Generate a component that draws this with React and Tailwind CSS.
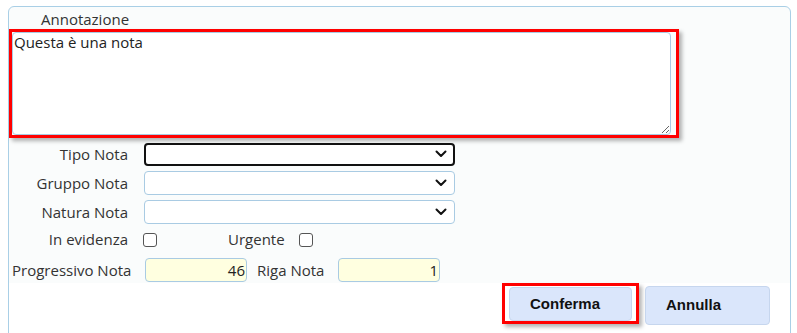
const labelCls = "text-[15px] leading-[19px] text-[#333] whitespace-nowrap";

function Chevron() {
  return (
    <svg width="12" height="8" viewBox="0 0 12 8" className="shrink-0">
      <polyline points="1.5,1.5 6,6 10.5,1.5" fill="none" stroke="#111" strokeWidth="2" strokeLinecap="round" strokeLinejoin="round" />
    </svg>
  );
}

function SelectRow({ label, focused }) {
  return (
    <div className="flex items-center h-[24px]">
      <div className={`w-[119px] text-right ${labelCls}`}>{label}</div>
      <div
        className={
          focused
            ? "ml-[16px] w-[311px] h-[23px] flex items-center justify-end pr-[6px] bg-white border-2 border-[#111] rounded-[4px]"
            : "ml-[16px] w-[311px] h-[24px] flex items-center justify-end pr-[7px] bg-white border border-[#a9cbe3] rounded-[4px]"
        }
      >
        <Chevron />
      </div>
    </div>
  );
}

function Check() {
  return <div className="w-[14px] h-[14px] bg-white border border-[#555] rounded-[3px]" />;
}

export default function App() {
  return (
    <div className="w-[797px] h-[333px] bg-white overflow-hidden" style={{ fontFamily: '"Open Sans", sans-serif' }}>
      <div className="ml-[8px] mt-[6px] w-[783px] h-[340px] border border-[#a9cfe6] rounded-t-[6px] bg-[#fafcfc] pt-[3px]">
        <div className={`pl-[32px] ${labelCls} leading-[18px]`}>Annotazione</div>

        {/* nota */}
        <div className="w-[670px] h-[109px] border-[3px] border-[#ff0000] shadow-[3px_3px_4px_rgba(0,0,0,0.3)]">
          <textarea
            className="block w-[659px] h-[103px] bg-white border border-[#a9cbe3] rounded-[4px] px-[1px] py-0 text-[15px] leading-[19px] text-[#222] outline-none resize"
            defaultValue="Questa è una nota"
          />
        </div>

        <div className="mt-[4px] flex flex-col gap-[5px]">
          <SelectRow label="Tipo Nota" focused />
          <SelectRow label="Gruppo Nota" />
          <SelectRow label="Natura Nota" />
        </div>

        <div className="mt-[6px] flex items-center h-[19px]">
          <div className={`w-[119px] text-right ${labelCls}`}>In evidenza</div>
          <div className="ml-[15px]"><Check /></div>
          <div className={`ml-[71px] ${labelCls}`}>Urgente</div>
          <div className="ml-[14px]"><Check /></div>
        </div>

        <div className="mt-[9px] flex items-center h-[24px]">
          <div className={`pl-[3px] w-[136px] ${labelCls}`}>Progressivo Nota</div>
          <div className="w-[102px] h-[24px] bg-[#ffffe0] border border-[#a9cbe3] rounded-[4px] text-right pr-[1px] text-[15px] leading-[22px] text-[#222]">46</div>
          <div className={`ml-[10px] w-[81px] ${labelCls}`}>Riga Nota</div>
          <div className="w-[102px] h-[24px] bg-[#ffffe0] border border-[#a9cbe3] rounded-[4px] text-right pr-[1px] text-[15px] leading-[22px] text-[#222]">1</div>
        </div>

        <div className="mt-[1px] flex items-start bg-white h-[60px]" style={{ fontFamily: '"Liberation Sans", Arial, sans-serif' }}>
          <div className="ml-[493px] border-[3px] border-[#ff0000] px-[4px] pt-[1px] shadow-[3px_3px_4px_rgba(0,0,0,0.3)]">
            <button className="w-[123px] h-[34px] bg-[#dae6fb] border border-[#c6d6ee] rounded-[4px] text-left pl-[20px] text-[15px] font-bold text-[#111]">
              Conferma
            </button>
          </div>
          <button className="ml-[6px] mt-[3px] w-[125px] h-[39px] bg-[#dae6fb] border border-[#c6d6ee] rounded-[4px] text-left pl-[20px] text-[15px] font-bold text-[#111]">
            Annulla
          </button>
        </div>
      </div>
    </div>
  );
}
